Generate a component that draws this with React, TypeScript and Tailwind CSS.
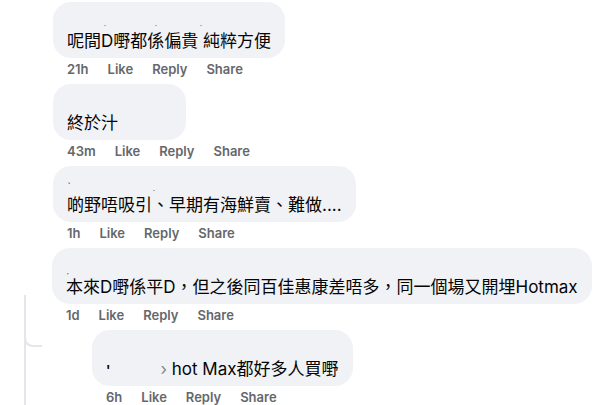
import React from 'react';

const font = { fontFamily: 'Inter, "Noto Sans CJK TC", sans-serif' };

function Meta({ time }: { time: string }) {
  return (
    <div className="flex h-[22px] items-center gap-[19px] pl-[14px] mb-[4px] text-[13px] font-semibold text-[#65676b] leading-[22px]">
      <span>{time}</span>
      <span>Like</span>
      <span>Reply</span>
      <span>Share</span>
    </div>
  );
}

function Bubble({ name, children }: { name?: React.ReactNode; children: React.ReactNode }) {
  return (
    <div className="inline-flex flex-col rounded-[18px] bg-[#f0f2f5] px-[14px] pt-[8px] pb-[6px]">
      <div className="flex h-[20px] items-center">{name}</div>
      <div className="h-[22px] whitespace-nowrap text-[17px] leading-[22px] text-[#050505]">{children}</div>
    </div>
  );
}

function Dot({ ml }: { ml: string }) {
  return <span className={`block h-[1px] w-[2px] bg-[#b0b3b8] ${ml}`} />;
}

export default function App() {
  return (
    <div className="h-[405px] w-[600px] overflow-hidden bg-white pt-[2px]" style={font}>
      <div className="pl-[53px]">
        <Bubble
          name={
            <div className="flex pt-[10px]">
              <Dot ml="ml-[37px]" />
              <Dot ml="ml-[49px]" />
              <Dot ml="ml-[43px]" />
            </div>
          }
        >
          呢間D嘢都係偏貴 純粹方便
        </Bubble>
        <Meta time="21h" />
      </div>

      <div className="pl-[53px]">
        <Bubble name={<span className="block w-[105px]" />}>終於汁</Bubble>
        <Meta time="43m" />
      </div>

      <div className="pl-[53px]">
        <Bubble
          name={
            <div className="flex items-end pt-[4px] text-[10px] leading-[10px] text-[#444]">
              <span>ˋ</span>
              <Dot ml="ml-[82px]" />
            </div>
          }
        >
          啲野唔吸引、早期有海鮮賣、難做....
        </Bubble>
        <Meta time="1h" />
      </div>

      <div className="relative">
        <svg className="absolute left-0 top-0" width="50" height="160" viewBox="0 0 50 160" fill="none">
          <path d="M25 47 V160" stroke="#e4e6eb" strokeWidth="2" />
          <path d="M25 89 Q25 98 34 98 H42" stroke="#e4e6eb" strokeWidth="2" />
        </svg>
        <div className="pl-[52px]">
          <Bubble
            name={<span className="pt-[6px] text-[10px] leading-[10px] text-[#555]">ˏ</span>}
          >
            本來D嘢係平D，但之後同百佳惠康差唔多，同一個場又開埋Hotmax
          </Bubble>
          <Meta time="1d" />
        </div>

        <div className="pl-[92px]">
          <Bubble>
            <span className="text-[13px] font-bold">'</span>
            <span className="inline-block w-[50px]" />
            <span className="text-[#888]">›</span> hot Max都好多人買嘢
          </Bubble>
          <Meta time="6h" />
        </div>
      </div>
    </div>
  );
}
